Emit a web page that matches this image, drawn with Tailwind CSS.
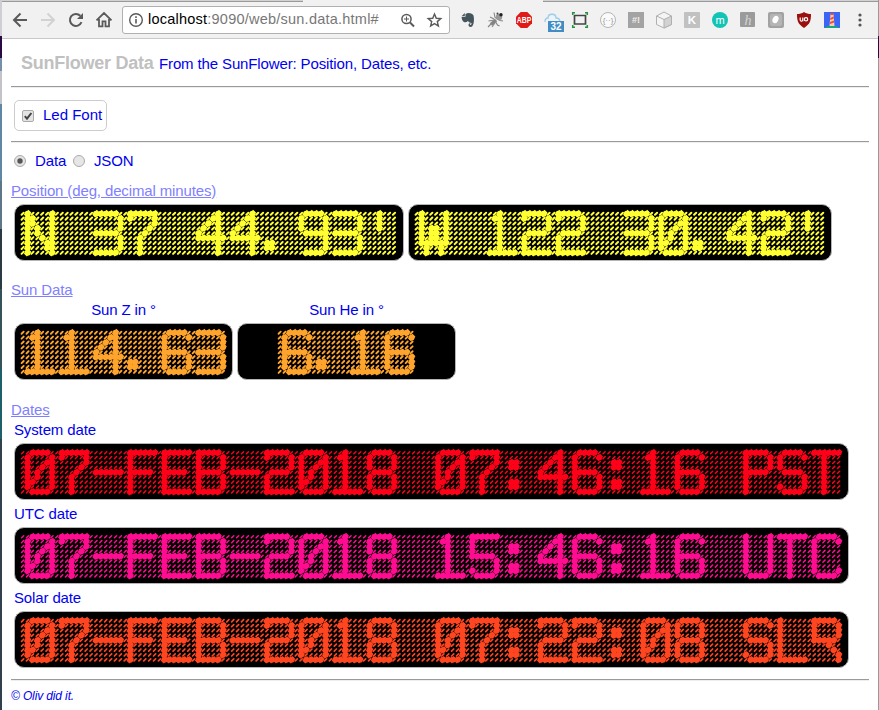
<!DOCTYPE html>
<html lang="en">
<head>
<meta charset="utf-8">
<title>SunFlower Data</title>
<script src="https://cdn.jsdelivr.net/npm/@tailwindcss/browser@4"></script>
</head>
<body class="h-[710px] w-[879px] overflow-hidden bg-white font-['Liberation_Sans',Arial,sans-serif] text-[15px] tracking-[-0.13px] text-[#0000f0]">
<div class="flex h-[710px]">
  <!-- window behind, left edge -->
  <div class="flex w-[2px] shrink-0 flex-col">
    <div class="h-[36px] bg-[#cfcfd3]"></div><div class="h-[22px] bg-[#2a0a42]"></div><div class="h-[13px] bg-[#7590a8]"></div><div class="h-[33px] bg-[#c4c4c8]"></div><div class="h-[77px] bg-[#5f86a3]"></div><div class="h-[48px] bg-[#5d7788]"></div><div class="h-[60px] bg-[#2a3942]"></div><div class="h-[80px] bg-[#35515a]"></div><div class="h-[70px] bg-[#1d6068]"></div><div class="flex-1 bg-[#30404c]"></div>
  </div>
  <div class="flex w-[876px] shrink-0 flex-col">
    <div class="flex h-[2px] shrink-0">
      <div class="w-[301px] border-b border-[#999] bg-[#d2d2d2]"></div>
      <div class="w-[240px] bg-[#f1f1f1]"></div>
      <div class="flex-1 border-b border-[#999] bg-[#d2d2d2]"></div>
    </div>
    <div class="flex h-[37px] shrink-0 items-center border-b border-[#c9c9c9] bg-[#f1f1f1] pl-[4px]">
      <div class="flex w-[116px]">
        <svg class="w-7" height="28" viewBox="0 0 28 28" fill="none" stroke="#5a5a5a" stroke-width="2"><path d="M21 14H8M14.5 7.500L8 14l6.500 6.500"/></svg>
        <svg class="w-7" height="28" viewBox="0 0 28 28" fill="none" stroke="#d2d2d2" stroke-width="2"><path d="M7 14h13M13.500 7.500L20 14l-6.500 6.500"/></svg>
        <svg class="w-7" height="28" viewBox="0 0 28 28" fill="none" stroke="#5a5a5a" stroke-width="2"><path d="M19.500 16.200A6 6 0 1 1 18.300 9.800"/><path d="M21 7v6h-6z" fill="#5a5a5a" stroke="none"/></svg>
        <svg class="w-7" height="28" viewBox="0 0 28 28" fill="none" stroke="#5a5a5a" stroke-width="1.800"><path d="M6.500 14.300L14 7l7.500 7.300M9 13v7.300h3.500v-5h3v5H19V13"/></svg>
      </div>
      <div class="flex h-[28px] w-[328px] items-center rounded-[3px] border border-[#b0b0b0] bg-white">
        <svg class="w-[25px]" height="26" viewBox="0 0 25 26"><circle cx="13" cy="13" r="6.300" fill="none" stroke="#5a5a5a" stroke-width="1.400"/><path d="M13 12v4.500M13 9.200v1.700" stroke="#5a5a5a" stroke-width="1.600"/></svg>
        <div class="w-[247px] whitespace-nowrap text-[14.5px] text-[#777] tracking-[0.23px]"><span class="text-black">localhost</span>:9090/web/sun.data.html#</div>
        <svg class="w-[27px]" height="26" viewBox="0 0 27 26" fill="none" stroke="#5a5a5a" stroke-width="1.500"><circle cx="11.500" cy="12" r="4.600"/><path d="M15 15.500l4 4" stroke-width="2"/><path d="M9 12h5M11.500 9.500v5" stroke-width="1"/></svg>
        <svg class="w-[27px]" height="26" viewBox="0 0 27 26" fill="none" stroke="#5a5a5a" stroke-width="1.400"><path d="M12.500 7l1.750 4.250 4.550.35-3.500 3 1.100 4.500-3.900-2.450-3.900 2.450 1.100-4.500-3.500-3 4.550-.35z"/></svg>
      </div>
      <div class="ml-[4px] flex tracking-normal">
        <svg class="w-7" height="28" viewBox="0 0 28 28"><path d="M11.500 8c3-2 7-.5 8 1.500.8 3 .7 8-1 10.500-1 1.300-4 1.300-4-1 0-2 2.500-2 2.500-1-.5-.4-1-.1-1 .6.500.8 1.500.5 1.500-1.600-1.500 0-3-.8-3.500-2-2 2-4.500 1.500-5.500-.5-.6-1.500-1-3-.8-3.800h3.800z" fill="#45555c"/><path d="M7.800 10l3-3v3z" fill="#45555c"/></svg>
        <svg class="w-7" height="28" viewBox="0 0 28 28" fill="none" stroke="#858585" stroke-width="1.100"><path d="M9 18.500l5-4.500" stroke-width="3.500"/><path d="M6 21l4-4M6.500 15l6-1 3 5 2 1M12 6.500l1 5 5 3 3 .5M8 11l4 2M10 21l3-4"/><circle cx="17" cy="11" r="3.200" fill="#999" stroke="none"/><circle cx="19" cy="8.800" r="1.700" fill="#222" stroke="none"/><circle cx="15.500" cy="7.500" r="1" fill="#444" stroke="none"/></svg>
        <svg class="w-7" height="28" viewBox="0 0 28 28"><path d="M10.700 6h6.600L22 10.700v6.600L17.300 22h-6.600L6 17.300v-6.600z" fill="#e01b17"/><text x="14" y="17" text-anchor="middle" font-family="Liberation Sans" font-weight="700" font-size="8.500" textLength="14.500" lengthAdjust="spacingAndGlyphs" fill="#fff">ABP</text></svg>
        <svg class="w-7" height="28" viewBox="0 0 28 28"><path d="M7 16c0-4 2-4 3-4 0-5 8-5 8 0 3 0 4 1 4 4" fill="#e9f4fb" stroke="#9fcbe5" stroke-width="1.300"/><path d="M10 15h16v11H10z" fill="#418dc4"/><text x="18" y="24.200" text-anchor="middle" font-family="Liberation Sans" font-weight="700" font-size="10" fill="#fff">32</text></svg>
        <svg class="w-7" height="28" viewBox="0 0 28 28" fill="none"><path d="M8.500 9.500h11v8.500h-11z" stroke="#444" stroke-width="1.700"/><path d="M6.700 9V6.700H9M19 6.700h2.300V9M21.300 19v2.300H19M9 21.300H6.700V19" stroke="#26943a" stroke-width="1.500"/></svg>
        <svg class="w-7" height="28" viewBox="0 0 28 28"><circle cx="14" cy="14" r="7.500" fill="#fafafa" stroke="#b5b5b5"/><text x="14" y="16.700" text-anchor="middle" font-family="Liberation Sans" font-size="8" fill="#999">{··}</text></svg>
        <svg class="w-7" height="28" viewBox="0 0 28 28"><path d="M6 6h16v16H6z" fill="#a3a3a3"/><text x="14" y="17" text-anchor="middle" font-family="Liberation Sans" font-weight="700" font-size="9" fill="#eee">#!</text></svg>
        <svg class="w-7" height="28" viewBox="0 0 28 28" stroke="#b0b0b0"><path d="M14 6l7.500 4v8.500L14 22l-7.500-3.500V10z" fill="#f4f4f4"/><path d="M14 13.500l7.500-3.500v8.500L14 22z" fill="#d2d2d2"/><path d="M6.500 10l7.500 3.500" fill="none"/></svg>
        <svg class="w-7" height="28" viewBox="0 0 28 28"><rect x="6" y="6" width="16" height="16" rx="1" fill="#c1c1c1"/><text x="14" y="18" text-anchor="middle" font-family="Liberation Sans" font-weight="700" font-size="11.500" fill="#fff">K</text></svg>
        <svg class="w-7" height="28" viewBox="0 0 28 28"><circle cx="14" cy="14" r="8" fill="#12c4b5"/><text x="14" y="17.500" text-anchor="middle" font-family="Liberation Sans" font-size="11" fill="#fff">m</text></svg>
        <svg class="w-7" height="28" viewBox="0 0 28 28"><rect x="6" y="6" width="15" height="15" rx="1" fill="#9b9b9b"/><text x="14" y="18.500" text-anchor="middle" font-family="Liberation Serif" font-style="italic" font-size="14" fill="#d5d5d5">h</text></svg>
        <svg class="w-7" height="28" viewBox="0 0 28 28"><rect x="6" y="6" width="16" height="16" rx="2" fill="#a2a2a2"/><rect x="8" y="8" width="12" height="12" rx="2" fill="#b5b5b5"/><ellipse cx="13.500" cy="13.500" rx="2.800" ry="3.800" transform="rotate(25 13.500 13.500)" fill="#fff"/></svg>
        <svg class="w-7" height="28" viewBox="0 0 28 28"><path d="M14 6c2 1.400 4.500 2 7 2 0 7-1 10-7 14-6-4-7-7-7-14 2.500 0 5-.6 7-2z" fill="#99100f"/><path d="M10.200 11.500v2.500q0 1.200 1.300 1.200t1.300-1.200v-2.500M12.800 15.200v-3.700" fill="none" stroke="#fff" stroke-width="1.200"/><circle cx="16" cy="13.300" r="1.700" fill="none" stroke="#fff" stroke-width="1.200"/></svg>
        <svg class="w-7" height="28" viewBox="0 0 28 28"><path d="M6 6h16v16H6z" fill="#3b66f5"/><path d="M6 22q8-5 16 0z" fill="#12a77c"/><path d="M12.500 8h3l1 12h-5z" fill="#ffc8b0"/><path d="M12.500 7h3v2h-3zM12.300 12l3.500-1.500v2l-3.500 1.500zM12 16l4-1.500v2L12 18z" fill="#ef4a3c"/></svg>
        <svg class="w-7" height="28" viewBox="0 0 28 28" fill="#555"><circle cx="14" cy="9" r="1.600"/><circle cx="14" cy="14" r="1.600"/><circle cx="14" cy="19" r="1.600"/></svg>
      </div>
    </div>

    <main class="flex flex-col pl-[9px] pr-[9px]">
      <header class="flex h-[47px] items-baseline whitespace-nowrap pl-[10px] pt-[11px]">
        <h1 class="w-[138px] text-[18px] font-bold tracking-[-0.25px] text-[#c0c0c0]">SunFlower Data</h1>
        <span>From the SunFlower: Position, Dates, etc.</span>
      </header>
      <hr class="h-[2px] border-t border-b border-t-[#9a9a9a] border-b-[#eee]">
      <label class="ml-[3px] mt-[12px] flex h-[31px] w-[93px] items-center rounded-[5px] border border-[#ccc] pl-[7px]">
        <svg class="mr-[9px]" width="12" height="12" viewBox="0 0 12 12"><rect x=".5" y=".5" width="11" height="11" rx="1.500" fill="#e4e4e4" stroke="#aaa"/><path d="M2.800 6.200l2.200 2.500L9.400 3" fill="none" stroke="#444" stroke-width="2"/></svg>
        <span class="whitespace-nowrap tracking-normal">Led Font</span>
      </label>
      <hr class="mt-[10px] h-[2px] border-t border-b border-t-[#9a9a9a] border-b-[#eee]">
      <div class="mt-[8px] flex h-[20px] items-center pl-[3px]">
        <svg class="mr-[9px]" width="12" height="12" viewBox="0 0 12 12"><circle cx="6" cy="6" r="5.500" fill="#e4e4e4" stroke="#aaa"/><circle cx="6" cy="6" r="2.700" fill="#555"/></svg>
        <span class="w-[38px]">Data</span>
        <svg class="mr-[9px]" width="12" height="12" viewBox="0 0 12 12"><circle cx="6" cy="6" r="5.500" fill="#e6e6e6" stroke="#aaa"/></svg>
        <span>JSON</span>
      </div>
      <h2 class="mt-[10px] h-[20px] leading-[20px] text-[#8080ff] underline">Position (deg, decimal minutes)</h2>
      <div class="ml-[3px] mt-[3px] flex gap-[4px]">
        <div data-led="N 37 44.93'" data-color="#ffff32" data-dim="2" class="flex h-[57px] w-[390px] items-center justify-center rounded-[10px] border border-[#b5b5b5] bg-black"></div>
        <div data-led="W 122 30.42'" data-color="#ffff32" data-dim="2" class="flex h-[57px] w-[424px] items-center justify-center rounded-[10px] border border-[#b5b5b5] bg-black"></div>
      </div>
      <h2 class="mt-[19px] h-[20px] leading-[20px] text-[#8080ff] underline">Sun Data</h2>
      <div class="ml-[3px] flex gap-[4px]">
        <div class="flex w-[219px] flex-col text-center"><span class="h-[23px] leading-[20px]">Sun Z in °</span>
          <div data-led="114.63" data-color="#ffa42c" data-dim="1.9" class="flex h-[57px] items-center justify-center rounded-[10px] border border-[#b5b5b5] bg-black"></div></div>
        <div class="flex w-[219px] flex-col text-center"><span class="h-[23px] leading-[20px]">Sun He in °</span>
          <div data-led="6.16" data-color="#ffa42c" data-dim="1.9" class="flex h-[57px] items-center justify-center rounded-[10px] border border-[#b5b5b5] bg-black"></div></div>
      </div>
      <h2 class="mt-[20px] h-[20px] leading-[20px] text-[#8080ff] underline">Dates</h2>
      <div class="ml-[3px] flex w-[835px] flex-col">
        <span class="h-[23px] leading-[20px]">System date</span>
        <div data-led="07-FEB-2018 07:46:16 PST" data-color="#ff0019" data-dim="1.5" class="flex h-[57px] items-center justify-center rounded-[10px] border border-[#b5b5b5] bg-black"></div>
        <span class="mt-[4px] h-[23px] leading-[20px]">UTC date</span>
        <div data-led="07-FEB-2018 15:46:16 UTC" data-color="#ff0c90" data-dim="1.5" class="flex h-[57px] items-center justify-center rounded-[10px] border border-[#b5b5b5] bg-black"></div>
        <span class="mt-[4px] h-[23px] leading-[20px]">Solar date</span>
        <div data-led="07-FEB-2018 07:22:08 SLR" data-color="#ff4621" data-dim="1.7" class="flex h-[57px] items-center justify-center rounded-[10px] border border-[#b5b5b5] bg-black"></div>
      </div>
      <hr class="mt-[11px] h-[2px] border-t border-b border-t-[#9a9a9a] border-b-[#eee]">
      <p class="mt-[6px] h-[18px] text-[12px] leading-[18px] italic">© Oliv did it.</p>
    </main>
  </div>
  <div class="flex w-[1px] shrink-0 flex-col bg-[#999]"><div class="h-[36px] bg-[#999]"></div><div class="h-[22px] bg-[#2a0a42]"></div></div>
</div>
<script>
// Each character is 9 rows of LEDs; the six columns are preceded by one blank column.
const F = {
 ' ':'......|......|......|......|......|......|......|......|......',
 '0':'.####.|#....#|#...##|#..#.#|#.#..#|#.#..#|##...#|#....#|.####.',
 '1':'..#...|.##...|..#...|..#...|..#...|..#...|..#...|..#...|######',
 '2':'#####.|#....#|.....#|.....#|.####.|#.....|#.....|#.....|######',
 '3':'#####.|.....#|.....#|.....#|#####.|.....#|.....#|.....#|#####.',
 '4':'....#.|...##.|..#.#.|.#..#.|#...#.|######|....#.|....#.|....#.',
 '5':'######|#.....|#.....|#.....|#####.|.....#|.....#|#....#|.####.',
 '6':'.####.|#....#|#.....|#.....|#####.|#....#|#....#|#....#|.####.',
 '7':'######|#....#|.....#|....#.|...#..|..#...|..#...|..#...|..#...',
 '8':'.####.|#....#|#....#|#....#|.####.|#....#|#....#|#....#|.####.',
 '9':'.####.|#....#|#....#|#....#|.#####|.....#|.....#|.....#|.####.',
 '-':'......|......|......|......|######|......|......|......|......',
 '.':'......|......|......|......|......|......|##....|##....|......',
 ':':'......|......|.##...|.##...|......|......|.##...|.##...|......',
 "'":'..#...|..#...|..#...|..#...|......|......|......|......|......',
 'N':'#....#|##...#|##...#|#.#..#|#.#..#|#..#.#|#...##|#...##|#....#',
 'W':'#....#|#....#|#....#|#.##.#|#.##.#|#.##.#|######|.#..#.|.#..#.',
 'F':'######|#.....|#.....|#.....|#####.|#.....|#.....|#.....|#.....',
 'E':'######|#.....|#.....|#.....|#####.|#.....|#.....|#.....|######',
 'B':'#####.|#....#|#....#|#....#|#####.|#....#|#....#|#....#|#####.',
 'P':'#####.|#....#|#....#|#....#|#####.|#.....|#.....|#.....|#.....',
 'S':'.####.|#....#|#.....|#.....|.####.|.....#|.....#|#....#|.####.',
 'T':'######|..#...|..#...|..#...|..#...|..#...|..#...|..#...|..#...',
 'U':'#....#|#....#|#....#|#....#|#....#|#....#|#....#|#....#|.####.',
 'C':'.####.|#....#|#.....|#.....|#.....|#.....|#.....|#....#|.####.',
 'L':'#.....|#.....|#.....|#.....|#.....|#.....|#.....|#.....|######',
 'R':'#####.|#....#|#....#|#....#|#####.|...#..|....#.|.....#|.....#'
};
const P = 4.886;
document.querySelectorAll('[data-led]').forEach(el => {
  const s = el.dataset.led, c = el.dataset.color;
  let off = '', slash = '', on = '';
  [...s].forEach((ch, i) => F[ch].split('|').forEach((row, r) => ('.' + row).split('').forEach((v, k) => {
    const x = (i * 7 + k + .5) * P - .7, y = (r + .5) * P + 1.2;
    off += `M${(x - 1.15).toFixed(2)} ${(y + 1.15).toFixed(2)}l2.1 -2.1`;
    if (v === '#') {
      on += `<circle cx="${x.toFixed(2)}" cy="${y.toFixed(2)}" r="3"/>`;
      slash += `M${(x - 2.3).toFixed(2)} ${(y + 2.3).toFixed(2)}l4.6 -4.6`;
    }
  })));
  const w = s.length * 7 * P;
  el.innerHTML = `<svg width="${w}" height="45" viewBox="0 0 ${w} 45" overflow="visible" role="img" aria-label="${s}"><path d="${off}" stroke="${c}" stroke-width="${el.dataset.dim}" stroke-linecap="round"/><path d="${slash}" stroke="${c}" stroke-width="4.2"/><g fill="${c}">${on}</g></svg>`;
});
</script>
</body>
</html>
